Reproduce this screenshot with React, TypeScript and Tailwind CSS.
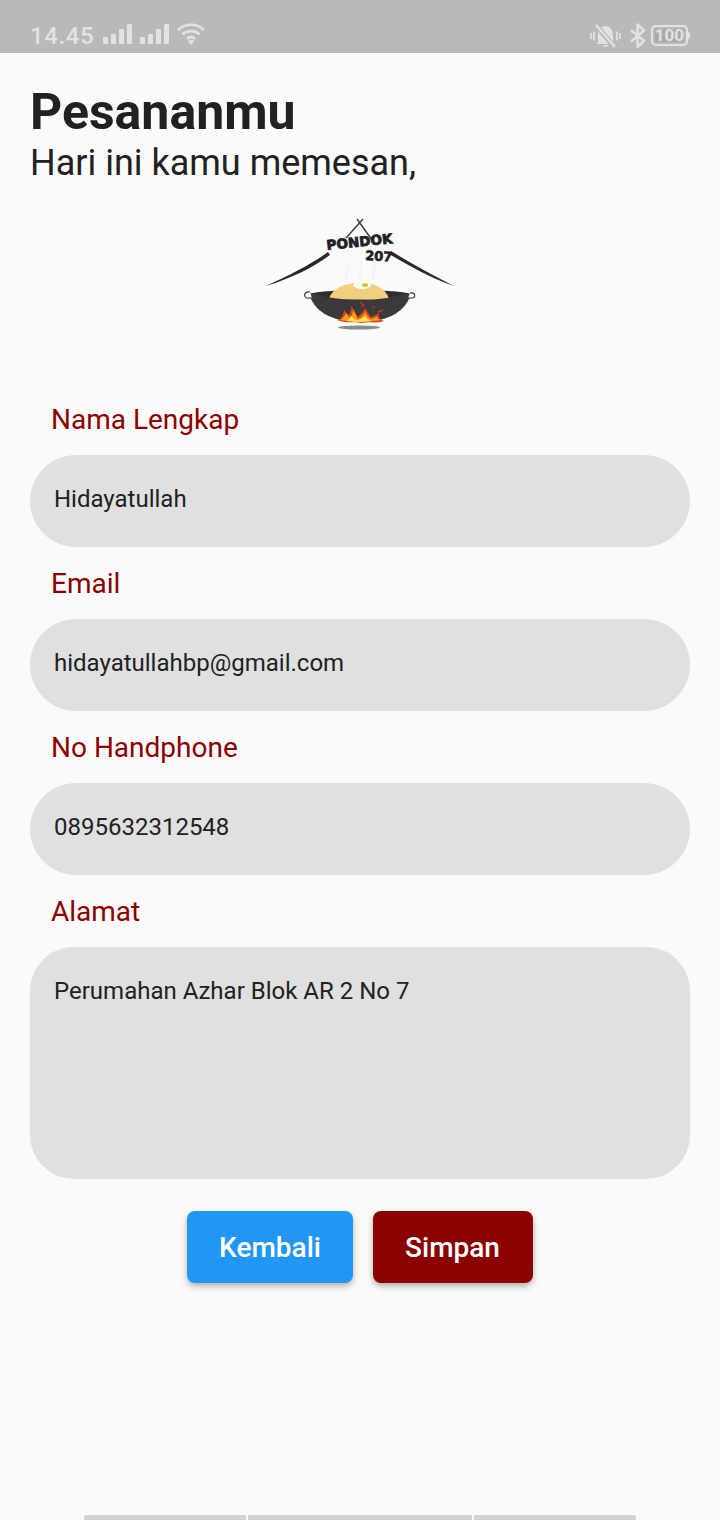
import React from 'react';

const StatusBar: React.FC = () => {
  const Signal = () => (
    <svg width="29" height="20" viewBox="0 0 29 20" className="fill-[#e2e2e2]">
      <rect x="0" y="13" width="5" height="7" rx="1" />
      <rect x="8" y="10" width="5" height="10" rx="1" />
      <rect x="16" y="5" width="5" height="15" rx="1" />
      <rect x="24" y="0" width="5" height="20" rx="1" />
    </svg>
  );

  return (
    <div className="h-[53px] bg-[#b9b9b9] flex items-end justify-between pl-[30px] pr-[30px] pb-[3px] text-[#e2e2e2]">
      <div className="flex items-center">
        <span className="text-[24px] leading-[28px] font-medium tracking-[0.6px] mr-[9px]">14.45</span>
        <div className="flex items-center gap-[8px] mb-[4px]">
          <Signal />
          <Signal />
        </div>
        <svg width="28" height="24" viewBox="0 0 28 24" fill="none" className="ml-[8px] mb-[4px] stroke-[#e2e2e2]">
          <path d="M1 8 C8 1 20 1 27 8" strokeWidth="2.6" />
          <path d="M5.5 12.5 C10 8 18 8 22.5 12.5" strokeWidth="2.6" />
          <path d="M10 17 C12.5 14.5 15.5 14.5 18 17" strokeWidth="2.6" />
          <path d="M14 23 L10.5 19 C12.5 17.6 15.5 17.6 17.5 19 Z" fill="#e2e2e2" stroke="none" />
        </svg>
      </div>
      <div className="flex items-center mb-[2px]">
        <svg width="31" height="24" viewBox="0 0 31 24" fill="none" className="mr-[8px]">
          <path d="M8 18 L8 11 C8 5 12 2 15.5 2 C19 2 23 5 23 11 L23 18 L25 20 L6 20 Z" fill="#e2e2e2" />
          <path d="M13 21 C13 23.5 18 23.5 18 21 Z" fill="#e2e2e2" />
          <path d="M6 1 L25 24" stroke="#b9b9b9" strokeWidth="5" />
          <path d="M6 1 L25 23" stroke="#e2e2e2" strokeWidth="2.2" />
          <path d="M1 9 V15 M4 7.5 V16.5 M27 7.5 V16.5 M30 9 V15" stroke="#e2e2e2" strokeWidth="1.8" />
        </svg>
        <svg width="17" height="25" viewBox="0 0 17 25" fill="none" className="mr-[5px] stroke-[#e2e2e2]">
          <path d="M2 7 L15 18 L8.5 24 V1.5 L15 7.5 L2 18.5" strokeWidth="2.6" strokeLinejoin="round" />
        </svg>
        <div className="relative w-[37px] h-[21px] border-2 border-[#e2e2e2] rounded-[5px] flex items-center justify-center mr-[2px]">
          <div className="absolute left-[2px] top-[2px] bottom-[2px] right-[2px] rounded-[2px] bg-[#a9a9a9]" />
          <span className="relative text-[17px] leading-[17px] font-bold text-[#e2e2e2]">100</span>
          <div className="absolute -right-[4px] top-[5px] w-[2px] h-[7px] bg-[#e2e2e2] rounded-r-sm" />
        </div>
      </div>
    </div>
  );
};

const Logo: React.FC = () => (
  <svg width="220" height="135" viewBox="0 0 220 135" className="block">
    {/* atap */}
    <path d="M16 81 C40 70 60 60 78 47 L80 50 C62 63 42 73 16 81 Z" fill="#2a2a2a" />
    <path d="M204 81 C180 73 160 61 139 49 L141 46 C162 59 182 70 204 81 Z" fill="#2a2a2a" />
    <path d="M96 33 L113 14 M122 35 L107 14" stroke="#3a3a3a" strokeWidth="1.4" fill="none" />
    <text x="77" y="45" fontFamily="'DejaVu Sans', sans-serif" fontWeight="900" fontSize="13.5" letterSpacing="0.1" fill="#222" stroke="#222" strokeWidth="0.8" transform="rotate(-6 77 45)">PONDOK</text>
    <text x="115" y="55" fontFamily="'DejaVu Sans', sans-serif" fontWeight="900" fontSize="13" fill="#222" stroke="#222" strokeWidth="0.6" transform="rotate(3 115 55)">207</text>
    {/* asap */}
    <path d="M97 74 C93 69 100 66 97 60 M111 72 C107 66 114 63 111 56 M124 74 C120 68 127 65 124 59" stroke="#f5f5f0" strokeWidth="3" fill="none" />
    {/* wajan belakang */}
    <ellipse cx="110" cy="90" rx="51" ry="5" fill="#2e2e30" />
    {/* nasi */}
    <path d="M79 94 C81 86 90 80 100 79 C108 76 120 77 127 81 C134 84 138 89 139 95 Z" fill="#f1cf7d" />
    <ellipse cx="112" cy="80" rx="9" ry="4" fill="#fdfdf5" />
    <ellipse cx="115" cy="80" rx="3" ry="2" fill="#e8c02c" />
    {/* wajan */}
    <path d="M59 88 C75 92 90 95 110 95 C130 95 145 92 161 88 C157 105 140 117 110 117 C80 117 63 105 59 88 Z" fill="#3a3a3c" />
    <path d="M60 87 C54 86 53 92 57 93 L62 93" stroke="#333" strokeWidth="1.1" fill="#fafafa" />
    <path d="M160 88 C166 87 166 93 162 93 L158 93" stroke="#333" strokeWidth="1.1" fill="#fafafa" />
    {/* api */}
    <path d="M87 115 C92 114 93 110 94 105 C96 107 97 109 99 110 C100 107 102 105 101 101 C105 105 106 109 108 112 C110 109 113 108 115 103 C118 107 119 110 121 112 C124 111 127 110 129 107 C128 111 129 114 134 116 C125 119 120 116 112 118 C104 116 98 119 87 115 Z" fill="#d9411a" />
    <path d="M90 115 C94 113 95 110 96 108 C98 110 99 112 100 113 C102 110 103 108 103 105 C105 108 106 111 108 114 C111 112 114 110 115 107 C117 110 118 112 121 114 C124 113 126 112 127 111 C127 113 128 114 131 115 C122 117 100 118 90 115 Z" fill="#f59a12" />
    <path d="M97 116 C99 114 100 113 101 111 C103 113 104 114 106 115 C110 115 113 113 115 111 C116 113 118 115 122 116 C114 117 104 117 97 116 Z" fill="#fde25a" />
    <path d="M110 97 L114 100 L111 102 M128 107 L133 105 M123 103 L124 101" stroke="#c9301c" strokeWidth="1.4" fill="none" />
    {/* bayangan */}
    <ellipse cx="109" cy="122.5" rx="21" ry="2" fill="#8c8c8c" />
  </svg>
);

interface FieldProps {
  label: string;
  value: string;
  multiline?: boolean;
}

const Field: React.FC<FieldProps> = ({ label, value, multiline }) => (
  <div>
    <div className="pl-[51px] h-[72px] pt-[19px] text-[28px] leading-[36px] text-[#8b0000]">{label}</div>
    <div
      className={`mx-[30px] bg-[#e0e0e0] px-[24px] text-[24px] text-[#212121] ${
        multiline ? 'h-[232px] rounded-[44px] pt-[29px] leading-[30px]' : 'h-[92px] rounded-[46px] leading-[88px]'
      }`}
    >
      {value}
    </div>
  </div>
);

const App: React.FC = () => {
  return (
    <div className="w-[720px] h-[1520px] bg-[#fafafa] relative overflow-hidden font-['Roboto',sans-serif]">
      <StatusBar />

      {/* judul */}
      <div className="pl-[30px] pt-[31px] text-[#212121]">
        <h1 className="text-[50px] leading-[56px] font-bold">Pesananmu</h1>
        <p className="text-[36px] leading-[42px] mt-[2px]">Hari ini kamu memesan,</p>
      </div>

      <div className="flex justify-center mt-[21px] mb-[43px]">
        <Logo />
      </div>

      <Field label="Nama Lengkap" value="Hidayatullah" />
      <Field label="Email" value="hidayatullahbp@gmail.com" />
      <Field label="No Handphone" value="0895632312548" />
      <Field label="Alamat" value="Perumahan Azhar Blok AR 2 No 7" multiline />

      {/* tombol */}
      <div className="flex justify-center gap-[20px] mt-[32px]">
        <button className="w-[166px] h-[72px] rounded-[8px] bg-[#2196f3] text-white text-[28px] font-medium pt-[1px] shadow-[0_3px_6px_rgba(0,0,0,0.3)]">
          Kembali
        </button>
        <button className="w-[160px] h-[72px] rounded-[8px] bg-[#8b0000] text-white text-[28px] font-medium pt-[1px] pr-[1px] shadow-[0_3px_6px_rgba(0,0,0,0.3)]">
          Simpan
        </button>
      </div>

      {/* navigasi bawah */}
      <div className="absolute left-[84px] bottom-0 flex gap-[2px] h-[5px]">
        <div className="w-[162px] bg-[#d2d2d2] rounded-tl-[2px]" />
        <div className="w-[224px] bg-[#d2d2d2]" />
        <div className="w-[162px] bg-[#d2d2d2] rounded-tr-[2px]" />
      </div>
    </div>
  );
};

export default App;
